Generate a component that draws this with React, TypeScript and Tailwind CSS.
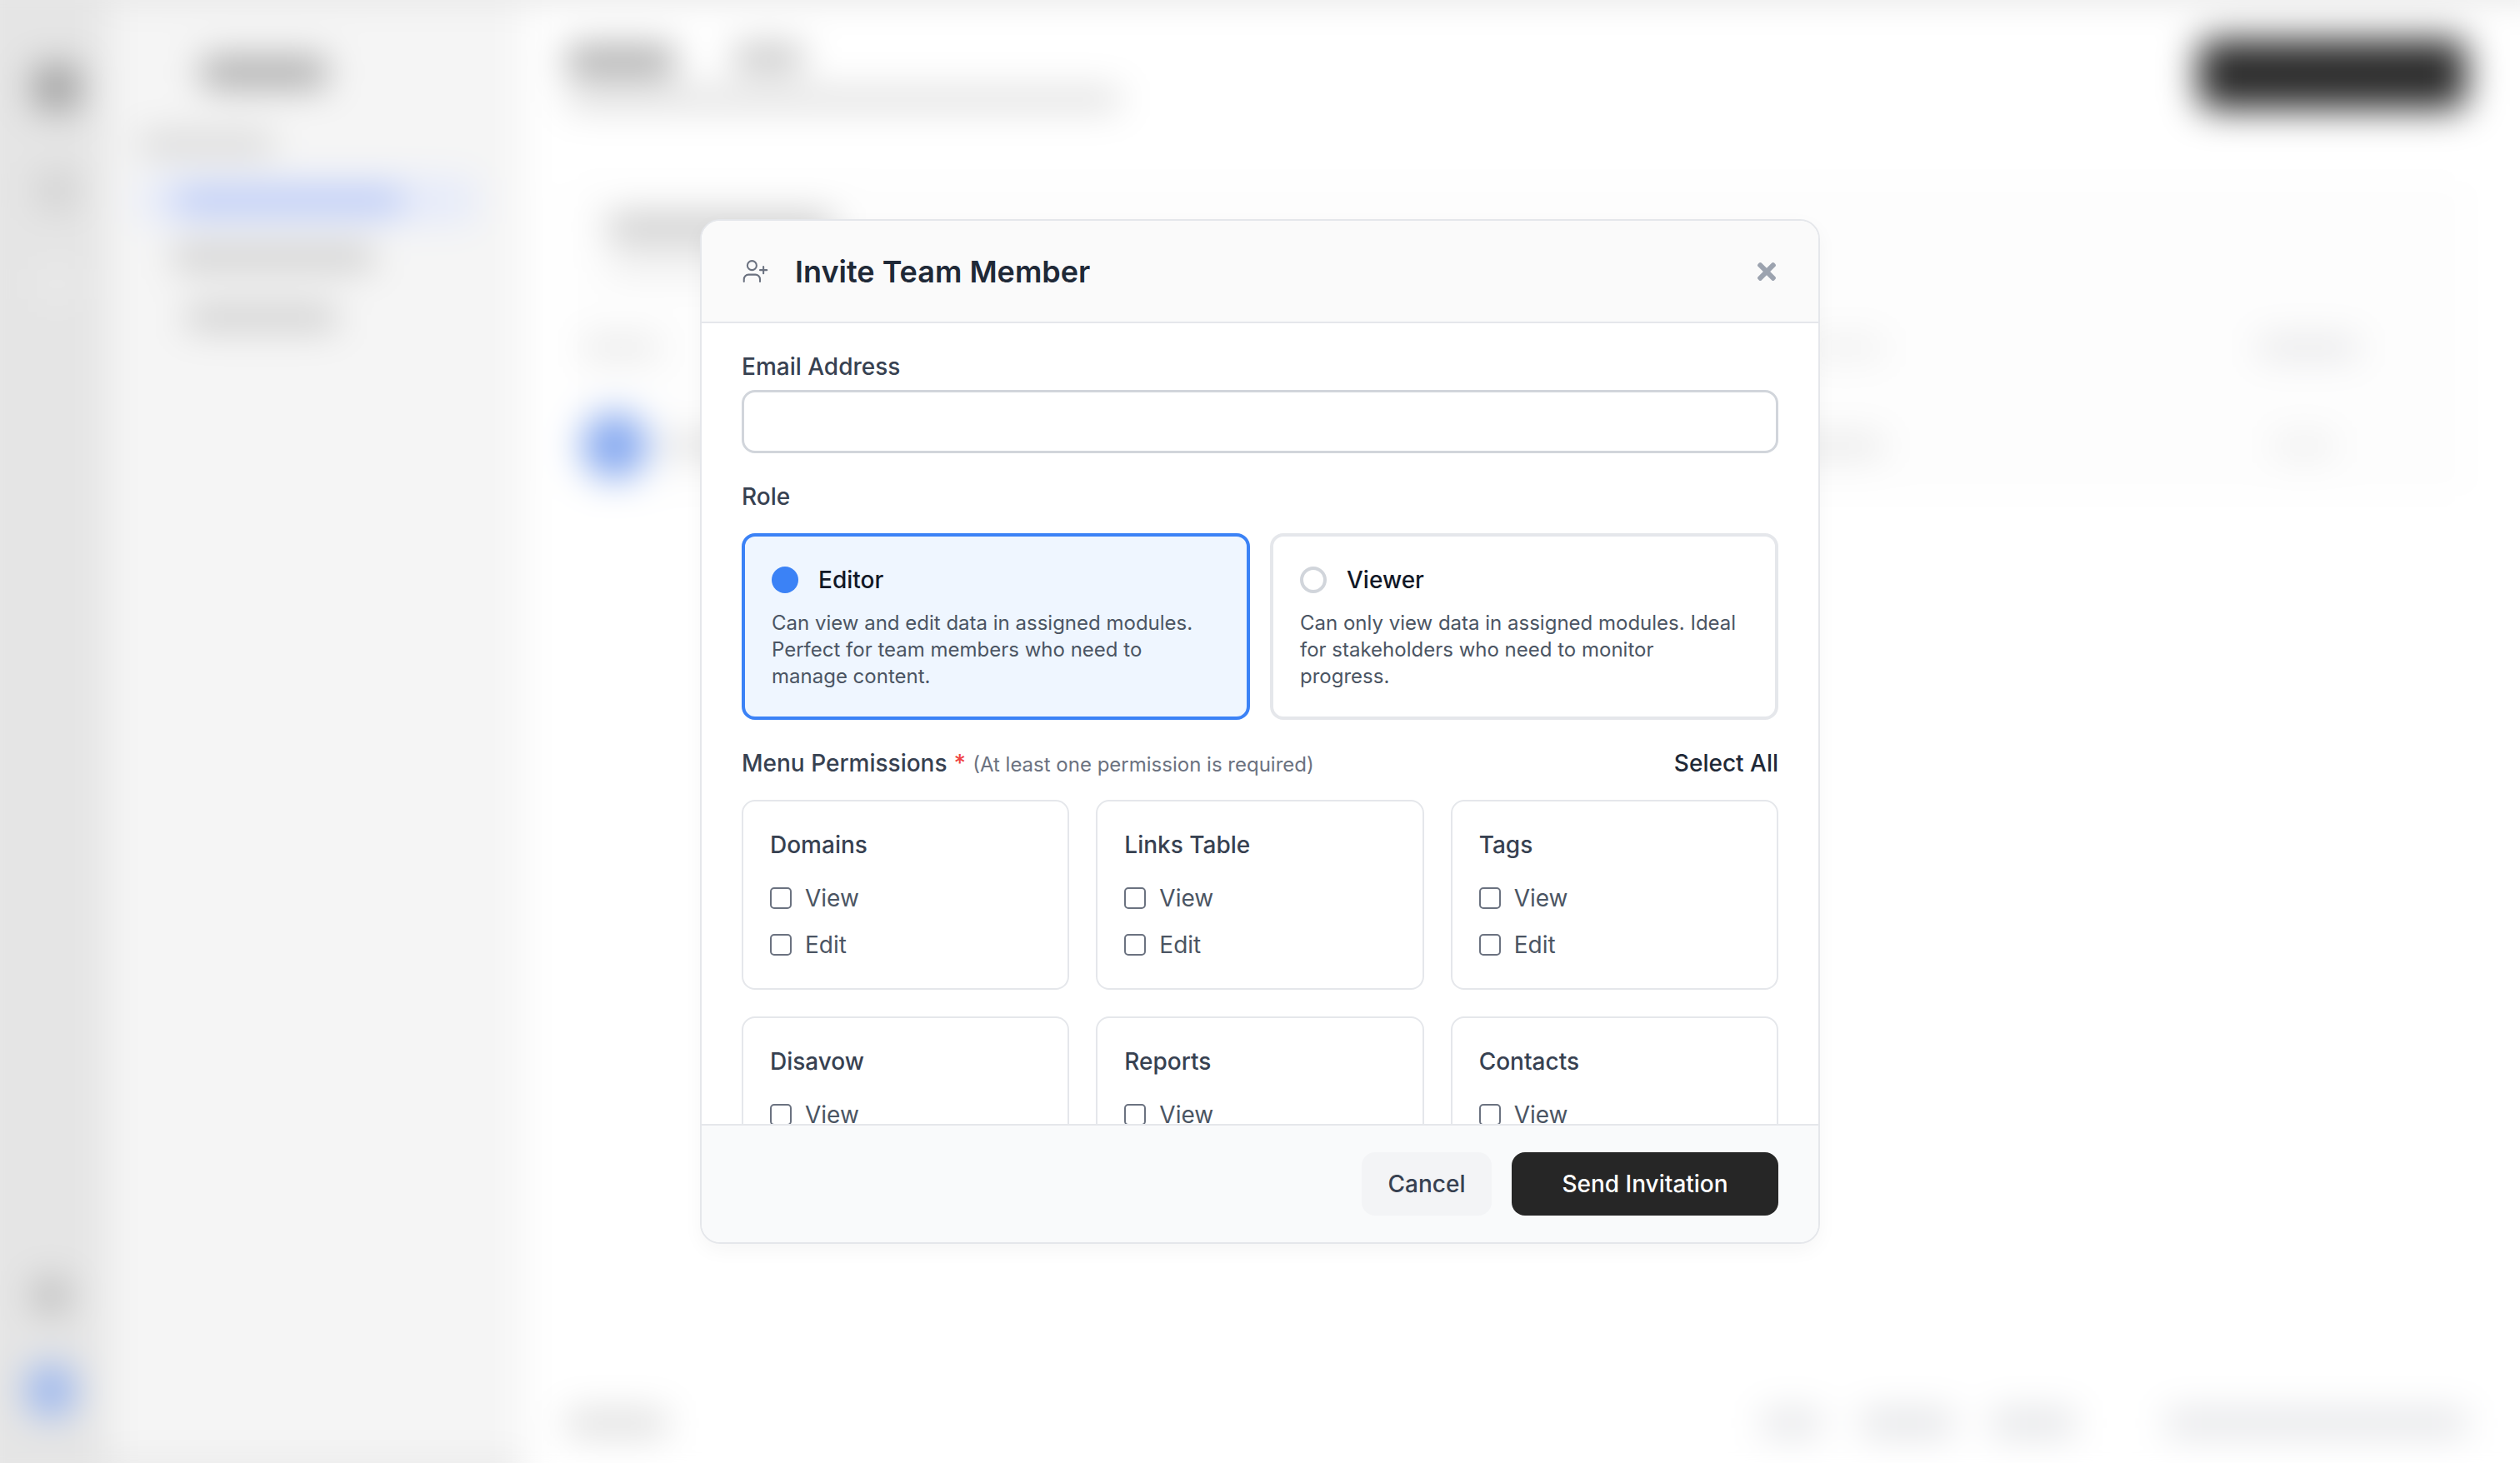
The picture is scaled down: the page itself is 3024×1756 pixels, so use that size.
import React from "react";
import { UserPlus } from "lucide-react";
import { FaTimes } from "react-icons/fa";

const perms = [
  { name: "Domains", actions: ["View", "Edit"] },
  { name: "Links Table", actions: ["View", "Edit"] },
  { name: "Tags", actions: ["View", "Edit"] },
  { name: "Disavow", actions: ["View"] },
  { name: "Reports", actions: ["View"] },
  { name: "Contacts", actions: ["View"] },
];

function Bar({ className }: { className: string }) {
  return <div className={className} />;
}

function Backdrop() {
  return (
    <div className="-ml-[40px] -mt-[40px] flex h-[1836px] w-[3104px] flex-col bg-white blur-[22px]">
      <div className="h-[41px] bg-[#e6e6e6]" />
      <div className="flex min-h-0 flex-1">
        <div className="flex w-[168px] flex-col items-center bg-[#e5e5e5] pl-[48px] pt-[76px]">
          <Bar className="h-[56px] w-[56px] rounded-[12px] bg-[#a0a0a0]" />
          <Bar className="mt-[74px] h-[44px] w-[44px] rounded-[8px] bg-[#d0d0d0]" />
          <Bar className="mt-[70px] h-[40px] w-[40px] rounded-[8px] bg-[#ebebeb]" />
          <Bar className="mr-[14px] mt-auto h-[44px] w-[44px] rounded-full bg-[#b8b8b8]" />
          <Bar className="mb-[95px] mr-[14px] mt-[60px] h-[64px] w-[60px] rounded-full bg-[#9ab6ef]" />
        </div>
        <div className="flex w-[500px] flex-col bg-[#f5f5f5]">
          <div className="flex flex-col pl-[40px] pt-[68px]">
            <Bar className="ml-[74px] h-[36px] w-[150px] rounded-[8px] bg-[#a8a8a8]" />
            <Bar className="mt-[56px] h-[24px] w-[160px] rounded-[6px] bg-[#d2d2d2]" />
            <div className="mt-[28px] flex h-[56px] w-[404px] items-center rounded-[12px] bg-[#e6ebfa] pl-[44px]">
              <Bar className="h-[28px] w-[270px] rounded-[6px] bg-[#b4c5f5]" />
            </div>
            <Bar className="ml-[40px] mt-[26px] h-[28px] w-[240px] rounded-[6px] bg-[#cacaca]" />
            <Bar className="ml-[56px] mt-[44px] h-[28px] w-[180px] rounded-[6px] bg-[#cacaca]" />
          </div>
          <div className="mt-auto h-[44px] bg-[#e9e9e9]" />
        </div>
        <div className="flex flex-1 flex-col pl-[52px] pr-[104px]">
          <div className="flex items-start pt-[54px]">
            <div className="flex flex-col">
              <div className="flex gap-[70px]">
                <Bar className="h-[36px] w-[130px] rounded-[8px] bg-[#a8a8a8]" />
                <Bar className="h-[28px] w-[84px] rounded-[8px] bg-[#bcbcbc]" />
              </div>
              <Bar className="mt-[16px] h-[24px] w-[664px] rounded-[6px] bg-[#dadada]" />
            </div>
            <Bar className="-mt-[8px] ml-auto h-[84px] w-[322px] rounded-[16px] bg-[#2c2c2c]" />
          </div>
          <div className="mt-[86px] flex flex-col rounded-[24px] bg-[#fdfdfd] pb-[20px]">
            <div className="pl-[50px] pt-[40px]">
              <Bar className="h-[32px] w-[270px] rounded-[8px] bg-[#c8c8c8]" />
              <Bar className="mt-[16px] h-[24px] w-[220px] rounded-[6px] bg-[#ececec]" />
            </div>
            <div className="mt-[76px] flex items-center pl-[20px] pr-[130px]">
              <Bar className="h-[24px] w-[90px] rounded-[6px] bg-[#e6e6e6]" />
              <Bar className="ml-auto h-[24px] w-[90px] rounded-[6px] bg-[#eeeeee]" />
              <Bar className="ml-[450px] h-[24px] w-[120px] rounded-[6px] bg-[#e4e4e6]" />
            </div>
            <div className="mt-[66px] flex items-center pl-[18px] pr-[160px]">
              <Bar className="h-[80px] w-[80px] rounded-full bg-[#86a9f0]" />
              <Bar className="ml-[20px] h-[24px] w-[120px] rounded-[6px] bg-[#dddddd]" />
              <Bar className="ml-auto h-[24px] w-[120px] rounded-[6px] bg-[#e6e6e6]" />
              <Bar className="ml-[470px] h-[24px] w-[70px] rounded-[6px] bg-[#ececec]" />
            </div>
          </div>
          <div className="mb-[73px] mt-auto flex items-center border-t-[2px] border-[#f6f6f6] pt-[118px]">
            <Bar className="h-[30px] w-[120px] rounded-[6px] bg-[#dcdcdc]" />
            <Bar className="ml-auto h-[30px] w-[70px] rounded-[6px] bg-[#e2e3e6]" />
            <Bar className="ml-[49px] h-[30px] w-[110px] rounded-[6px] bg-[#e0e1e4]" />
            <Bar className="ml-[46px] h-[30px] w-[100px] rounded-[6px] bg-[#e0e1e4]" />
            <Bar className="ml-[110px] h-[30px] w-[360px] rounded-[6px] bg-[#e2e3e6]" />
          </div>
        </div>
      </div>
    </div>
  );
}

function RoleCard({ name, desc, selected }: { name: string; desc: string; selected: boolean }) {
  return (
    <label
      className={
        selected
          ? "flex-1 rounded-[16px] border-[4px] border-[#3b82f6] bg-[#eff6ff] px-[32px] pb-[32px] pt-[32px]"
          : "flex-1 rounded-[16px] border-[4px] border-[#e5e7eb] bg-white px-[32px] pb-[32px] pt-[32px]"
      }
    >
      <div className="flex items-center gap-[24px]">
        {selected ? (
          <span className="h-[32px] w-[32px] rounded-full bg-[#3b82f6]" />
        ) : (
          <span className="h-[32px] w-[32px] rounded-full border-[4px] border-[#d1d5db] bg-white" />
        )}
        <span className="text-[28px] font-medium leading-[40px] text-[#111827]">{name}</span>
      </div>
      <p className="mt-[16px] text-[24px] leading-[32px] text-[#4b5563]">{desc}</p>
    </label>
  );
}

function PermCard({ name, actions }: { name: string; actions: string[] }) {
  return (
    <div className="h-[228px] rounded-[16px] border-[2px] border-[#e5e7eb] bg-white px-[32px] pt-[32px]">
      <div className="mb-[24px] text-[28px] font-medium leading-[40px] text-[#374151]">{name}</div>
      <div className="flex flex-col gap-[16px]">
        {actions.map((a) => (
          <label key={a} className="flex h-[40px] items-center gap-[16px] text-[28px] leading-[40px] text-[#4b5563]">
            <input type="checkbox" className="h-[26px] w-[26px] appearance-none rounded-[5px] border-[2px] border-[#6b7280] bg-white" />
            <span>{a}</span>
          </label>
        ))}
      </div>
    </div>
  );
}

export default function App() {
  return (
    <div className="relative h-[1756px] w-[3024px] overflow-hidden bg-white font-['Inter',sans-serif]">
      <Backdrop />
      <div className="absolute inset-0 flex items-center justify-center">
        <div className="flex h-[1230px] w-[1344px] flex-col overflow-hidden rounded-[24px] border-[2px] border-[#e5e7eb] bg-white shadow-[0_8px_24px_rgba(0,0,0,0.04)]">
          <div className="flex h-[123px] shrink-0 items-center border-b-[2px] border-[#e5e7eb] bg-[#fafafa] px-[48px]">
            <UserPlus size={33} strokeWidth={1.5} className="text-[#6b7280]" />
            <h2 className="ml-[31px] text-[36px] font-semibold leading-[56px] text-[#1f2937]">Invite Team Member</h2>
            <button className="-mr-[2px] ml-auto flex h-[32px] w-[32px] items-center justify-center text-[#9ca3af]">
              <FaTimes size={32} />
            </button>
          </div>
          <div className="min-h-0 flex-1 overflow-hidden px-[48px] pt-[32px]">
            <div className="mb-[8px] text-[28px] font-medium leading-[40px] text-[#374151]">Email Address</div>
            <input type="email" className="block h-[76px] w-full rounded-[16px] border-[3px] border-[#d1d5db] bg-white" />
            <div className="mb-[24px] mt-[32px] text-[28px] font-medium leading-[40px] text-[#374151]">Role</div>
            <div className="flex gap-[24px]">
              <RoleCard
                selected
                name="Editor"
                desc="Can view and edit data in assigned modules. Perfect for team members who need to manage content."
              />
              <RoleCard
                selected={false}
                name="Viewer"
                desc="Can only view data in assigned modules. Ideal for stakeholders who need to monitor progress."
              />
            </div>
            <div className="mb-[24px] mt-[32px] flex items-center justify-between">
              <div className="flex items-baseline">
                <span className="text-[28px] font-medium leading-[40px] text-[#374151]">Menu Permissions</span>
                <span className="ml-[8px] text-[28px] font-medium leading-[40px] text-[#ef4444]">*</span>
                <span className="ml-[8px] text-[24px] leading-[32px] text-[#6b7280]">(At least one permission is required)</span>
              </div>
              <button className="text-[28px] font-medium leading-[40px] text-[#1f2937]">Select All</button>
            </div>
            <div className="grid grid-cols-3 gap-[32px]">
              {perms.map((p) => (
                <PermCard key={p.name} name={p.name} actions={p.actions} />
              ))}
            </div>
          </div>
          <div className="flex h-[142px] shrink-0 items-center justify-end gap-[24px] border-t-[2px] border-[#e5e7eb] bg-[#f9fafb] px-[48px]">
            <button className="h-[76px] w-[156px] rounded-[16px] bg-[#f3f4f6] text-[28px] font-medium text-[#374151]">Cancel</button>
            <button className="h-[76px] w-[320px] rounded-[16px] bg-[#262626] text-[28px] font-medium text-white">Send Invitation</button>
          </div>
        </div>
      </div>
    </div>
  );
}
